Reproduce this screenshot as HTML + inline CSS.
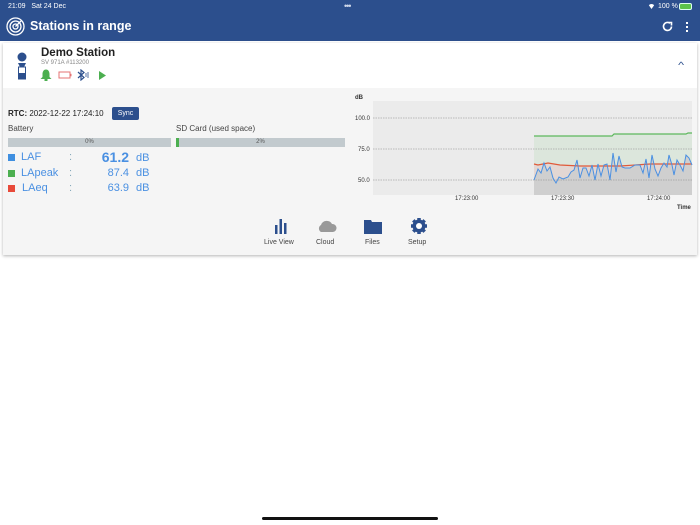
<!DOCTYPE html>
<html><head><meta charset="utf-8"><style>
*{margin:0;padding:0;box-sizing:border-box}
body{width:700px;height:525px;background:#fff;font-family:"Liberation Sans",sans-serif;position:relative;overflow:hidden}
.a{position:absolute;white-space:nowrap}
</style></head><body>
<div class="a" style="left:0;top:0;width:700px;height:41px;background:#2c4f8d"></div>
<div class="a" style="left:8px;top:3px;font-size:7px;color:#fff">21:09&nbsp;&nbsp; Sat 24 Dec</div>
<div class="a" style="left:344px;top:1px;font-size:9px;color:#cfd8ea;letter-spacing:-1px">•••</div>
<div class="a" style="left:658px;top:3px;font-size:7px;color:#fff">100 %</div>
<div class="a" style="left:648px;top:4px;width:7px;height:5px;border-radius:5px 5px 0 0;background:#fff;clip-path:polygon(0 0,100% 0,50% 100%)"></div>
<div class="a" style="left:679px;top:3px;width:13px;height:7px;background:#5cc34a;border-radius:2px;border:1px solid #dfe"></div>
<svg class="a" style="left:6px;top:17px" width="19" height="19" viewBox="0 0 19 19" fill="none" stroke="#fff" stroke-width="1.3"><circle cx="9.5" cy="9.5" r="8.5"/><circle cx="9.5" cy="9.5" r="5.5"/><circle cx="9.5" cy="9.5" r="2.5"/><path d="M9.5 9.5L15 4"/></svg>
<div class="a" style="left:30px;top:19px;font-size:12.5px;font-weight:bold;color:#fff">Stations in range</div>
<svg class="a" style="left:662px;top:21px" width="11" height="11" viewBox="0 0 11 11" fill="none" stroke="#fff" stroke-width="1.6"><path d="M9.5 5.5A4 4 0 1 1 8 2.3"/><path d="M6.5 1.5H9.5V4.5" /></svg>
<div class="a" style="left:686px;top:22px;width:2px;height:2px;background:#fff;box-shadow:0 4px #fff,0 8px #fff"></div>

<div class="a" style="left:3px;top:43px;width:694px;height:212px;background:#f5f5f5;box-shadow:0 1px 3px rgba(0,0,0,.3)"></div>
<div class="a" style="left:3px;top:43px;width:694px;height:45px;background:#fff"></div>
<svg class="a" style="left:15px;top:52px" width="14" height="28" viewBox="0 0 14 28"><circle cx="7" cy="5" r="4.5" fill="#2c4f8d"/><path d="M3 11H11L9 15H5Z" fill="#2c4f8d"/><rect x="3.5" y="15" width="7" height="12" fill="#fff" stroke="#2c4f8d"/><rect x="3.5" y="21" width="7" height="6" fill="#2c4f8d"/></svg>
<div class="a" style="left:41px;top:47px;font-size:11.5px;font-weight:bold;color:#222">Demo Station</div>
<div class="a" style="left:41px;top:60px;font-size:6px;color:#888">SV 971A #113200</div>
<svg class="a" style="left:40px;top:69px" width="70" height="12" viewBox="0 0 70 12"><path d="M6 0.5C3.5 .5 2.5 3 2.5 5V8L0.5 10H11.5L9.5 8V5C9.5 3 8.5 .5 6 .5Z" fill="#4caf50"/><rect x="4.5" y="10" width="3" height="2" fill="#4caf50"/><rect x="19" y="3" width="11" height="6" fill="none" stroke="#e57373" stroke-width="1"/><rect x="30" y="4.8" width="1.5" height="2.5" fill="#e57373"/><path d="M38 3L44 8.5L41 11V1L44 3.5L38 9" fill="none" stroke="#2c4f8d" stroke-width="1.2"/><path d="M46 4V8M48 3V9" stroke="#2c4f8d" stroke-width=".8"/><path d="M59 2V11L66 6.5Z" fill="#4caf50"/></svg>
<div class="a" style="left:679px;top:60px;font-size:9px;color:#2c4f8d;transform:scaleX(1.4)">^</div>

<div class="a" style="left:8px;top:109px;font-size:8px;color:#222"><b>RTC:</b> 2022-12-22 17:24:10</div>
<div class="a" style="left:112px;top:107px;width:27px;height:13px;background:#2c4f8d;border-radius:2px;color:#fff;font-size:7px;text-align:center;line-height:13px">Sync</div>
<div class="a" style="left:8px;top:124px;font-size:8px;color:#444">Battery</div>
<div class="a" style="left:176px;top:124px;font-size:8px;color:#444">SD Card (used space)</div>
<div class="a" style="left:8px;top:138px;width:163px;height:9px;background:#c2cace;font-size:6px;color:#555;text-align:center;line-height:9px">0%</div>
<div class="a" style="left:176px;top:138px;width:169px;height:9px;background:#c2cace;font-size:6px;color:#555;text-align:center;line-height:9px">2%</div>
<div class="a" style="left:176px;top:138px;width:3px;height:9px;background:#4caf50"></div>
<div class="a" style="left:8px;top:154px;width:7px;height:7px;background:#3f8fe0"></div>
<div class="a" style="left:8px;top:170px;width:7px;height:7px;background:#4caf50"></div>
<div class="a" style="left:8px;top:185px;width:7px;height:7px;background:#e84a3a"></div>
<div class="a" style="left:21px;top:151px;font-size:11px;color:#4a90e2">LAF</div>
<div class="a" style="left:21px;top:167px;font-size:11px;color:#4a90e2">LApeak</div>
<div class="a" style="left:22px;top:182px;font-size:11px;color:#4a90e2">LAeq</div>
<div class="a" style="left:69px;top:151px;font-size:11px;color:#8ab">:</div>
<div class="a" style="left:69px;top:167px;font-size:11px;color:#8ab">:</div>
<div class="a" style="left:69px;top:182px;font-size:11px;color:#8ab">:</div>
<div class="a" style="left:97px;top:149px;width:32px;text-align:right;font-size:14px;font-weight:bold;color:#4a90e2">61.2</div>
<div class="a" style="left:97px;top:167px;width:32px;text-align:right;font-size:11px;color:#4a90e2">87.4</div>
<div class="a" style="left:97px;top:182px;width:32px;text-align:right;font-size:11px;color:#4a90e2">63.9</div>
<div class="a" style="left:136px;top:152px;font-size:11px;color:#4a90e2">dB</div>
<div class="a" style="left:136px;top:167px;font-size:11px;color:#4a90e2">dB</div>
<div class="a" style="left:136px;top:182px;font-size:11px;color:#4a90e2">dB</div>

<svg class="a" style="left:350px;top:90px" width="350" height="125" viewBox="350 90 350 125" font-family="Liberation Sans" font-size="6" fill="#333">
<text x="355" y="99" font-weight="bold">dB</text>
<rect x="373" y="101" width="319" height="94" fill="#ebebeb"/>
<path d="M534 136H612L614 134H686L688 133H692V195H534Z" fill="#dce6dc"/>
<path d="M534 164L538 165L548 163L560 165L580 166L620 166L650 164L692 164V195H534Z" fill="#e3d7d3"/>
<path d="M534 180L538 169L541 173L544 163L547 171L550 167L553 178L556 183L559 177L563 179L568 177L571 172L574 170L577 160L580 178L583 168L586 168L589 176L592 165L595 180L598 164L601 176L604 165L607 164L610 180L613 153L616 172L619 156L622 167L625 168L630 168L635 165L640 165L643 173L646 159L649 178L652 155L655 169L658 176L661 168L664 163L667 167L669 155L672 165L674 175L677 160L680 165L683 171L686 155L689 158L692 165V195H534Z" fill="#cfcfcf"/>
<g stroke="#888" stroke-width=".6" stroke-dasharray="1.5 1"><path d="M373 118H692M373 149H692M373 180H692"/></g>
<path d="M534 136H612L614 134H686L688 133H692" fill="none" stroke="#5cb85c" stroke-width="1.2"/>
<path d="M534 164L538 165L548 163L560 165L580 166L620 166L650 164L692 164" fill="none" stroke="#e05a3a" stroke-width="1.2"/>
<path d="M534 180L538 169L541 173L544 163L547 171L550 167L553 178L556 183L559 177L563 179L568 177L571 172L574 170L577 160L580 178L583 168L586 168L589 176L592 165L595 180L598 164L601 176L604 165L607 164L610 180L613 153L616 172L619 156L622 167L625 168L630 168L635 165L640 165L643 173L646 159L649 178L652 155L655 169L658 176L661 168L664 163L667 167L669 155L672 165L674 175L677 160L680 165L683 171L686 155L689 158L692 165" fill="none" stroke="#4a90e2" stroke-width="1"/>
<text x="355" y="120">100.0</text><text x="358" y="151">75.0</text><text x="358" y="182">50.0</text>
<text x="455" y="200">17:23:00</text><text x="551" y="200">17:23:30</text><text x="647" y="200">17:24:00</text>
<text x="677" y="209" font-weight="bold">Time</text>
</svg>

<svg class="a" style="left:274px;top:218px" width="14" height="16" viewBox="0 0 14 16" fill="#2c4f8d"><rect x="1" y="7" width="2.5" height="9"/><rect x="5.5" y="1" width="2.5" height="15"/><rect x="10" y="5" width="2.5" height="11"/></svg>
<svg class="a" style="left:316px;top:220px" width="22" height="12" viewBox="0 0 22 12" fill="#999"><path d="M5 12A4 4 0 0 1 5 5A6 6 0 0 1 16 4A4 4 0 0 1 17 12Z"/></svg>
<svg class="a" style="left:364px;top:219px" width="18" height="15" viewBox="0 0 18 15" fill="#2c4f8d"><path d="M0 1H7L8 3H18V15H0Z"/></svg>
<svg class="a" style="left:410px;top:217px" width="18" height="18" viewBox="0 0 18 18"><g fill="#2c4f8d"><circle cx="9" cy="9" r="6.5"/><g stroke="#2c4f8d" stroke-width="3.5"><path d="M9 1V17M1 9H17M3.3 3.3L14.7 14.7M14.7 3.3L3.3 14.7"/></g></g><circle cx="9" cy="9" r="3" fill="#fff"/></svg>
<div class="a" style="left:264px;top:239px;font-size:7px;color:#444">Live View</div>
<div class="a" style="left:316px;top:239px;font-size:7px;color:#444">Cloud</div>
<div class="a" style="left:365px;top:239px;font-size:7px;color:#444">Files</div>
<div class="a" style="left:408px;top:239px;font-size:7px;color:#444">Setup</div>
<div class="a" style="left:262px;top:517px;width:176px;height:3px;border-radius:2px;background:#111"></div>
</body></html>
